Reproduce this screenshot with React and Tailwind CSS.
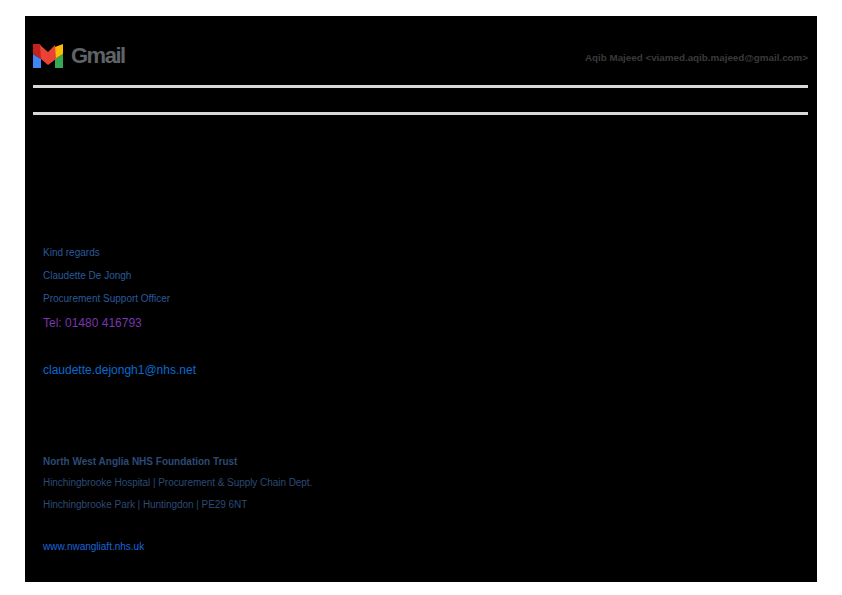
export default function App() {
  return (
    <div className="w-[842px] h-[595px] bg-white pt-[16px] pl-[25px] font-['Liberation_Sans',Arial,sans-serif] overflow-hidden">
      <div className="w-[792px] h-[566px] bg-black pl-[8px] pr-[9px] flex flex-col">
        <div className="h-[69px] flex items-end pb-[17px]">
          <div className="flex items-center flex-1">
            <svg width="30" height="24" viewBox="0 0 30 24">
              <path d="M0 10l8 5v9H0z" fill="#4285f4" />
              <path d="M22 15l8-5v14h-8z" fill="#34a853" />
              <path d="M22 3l8-3v10l-8 5z" fill="#fbbc04" />
              <path d="M0 0h7l1 2v13L0 10z" fill="#c5221f" />
              <path d="M7 1l8 7 7-7 1 14-8 6-7-6z" fill="#ea4335" />
            </svg>
            <span className="ml-[8px] text-[22px] leading-[24px] font-bold tracking-[-1.5px] text-[#5f6368]">Gmail</span>
          </div>
          <span className="text-[9.8px] leading-[24px] font-bold text-[#3a3a3a] relative top-[2px]">Aqib Majeed &lt;viamed.aqib.majeed@gmail.com&gt;</span>
        </div>
        <div className="h-[3px] bg-[#d8d8d8]" />
        <div className="h-[24px]" />
        <div className="h-[3px] bg-[#d8d8d8]" />
        <div className="pl-[10px] flex flex-col">
          <p className="mt-[131px] h-[23px] text-[10px] leading-[14px] text-[#2a5a9c]">Kind regards</p>
          <p className="h-[23px] text-[10px] leading-[14px] text-[#2a5a9c]">Claudette De Jongh</p>
          <p className="h-[24px] text-[10px] leading-[14px] text-[#2a5a9c]">Procurement Support Officer</p>
          <p className="h-[47px] text-[12px] leading-[14px] text-[#7a35b0]">Tel: 01480 416793</p>
          <p className="text-[12px] leading-[14px] text-[#0a6ad0]">claudette.dejongh1@nhs.net</p>
          <p className="mt-[78px] h-[21px] text-[10px] leading-[14px] font-bold text-[#2c4a75]">North West Anglia NHS Foundation Trust</p>
          <p className="h-[22px] text-[10px] tracking-[-0.05px] leading-[14px] text-[#2c4a75]">Hinchingbrooke Hospital | Procurement &amp; Supply Chain Dept.</p>
          <p className="h-[42px] text-[10px] tracking-[-0.05px] leading-[14px] text-[#2c4a75]">Hinchingbrooke Park | Huntingdon | PE29 6NT</p>
          <p className="text-[10px] leading-[14px] text-[#1a66d8]">www.nwangliaft.nhs.uk</p>
        </div>
      </div>
    </div>
  );
}
